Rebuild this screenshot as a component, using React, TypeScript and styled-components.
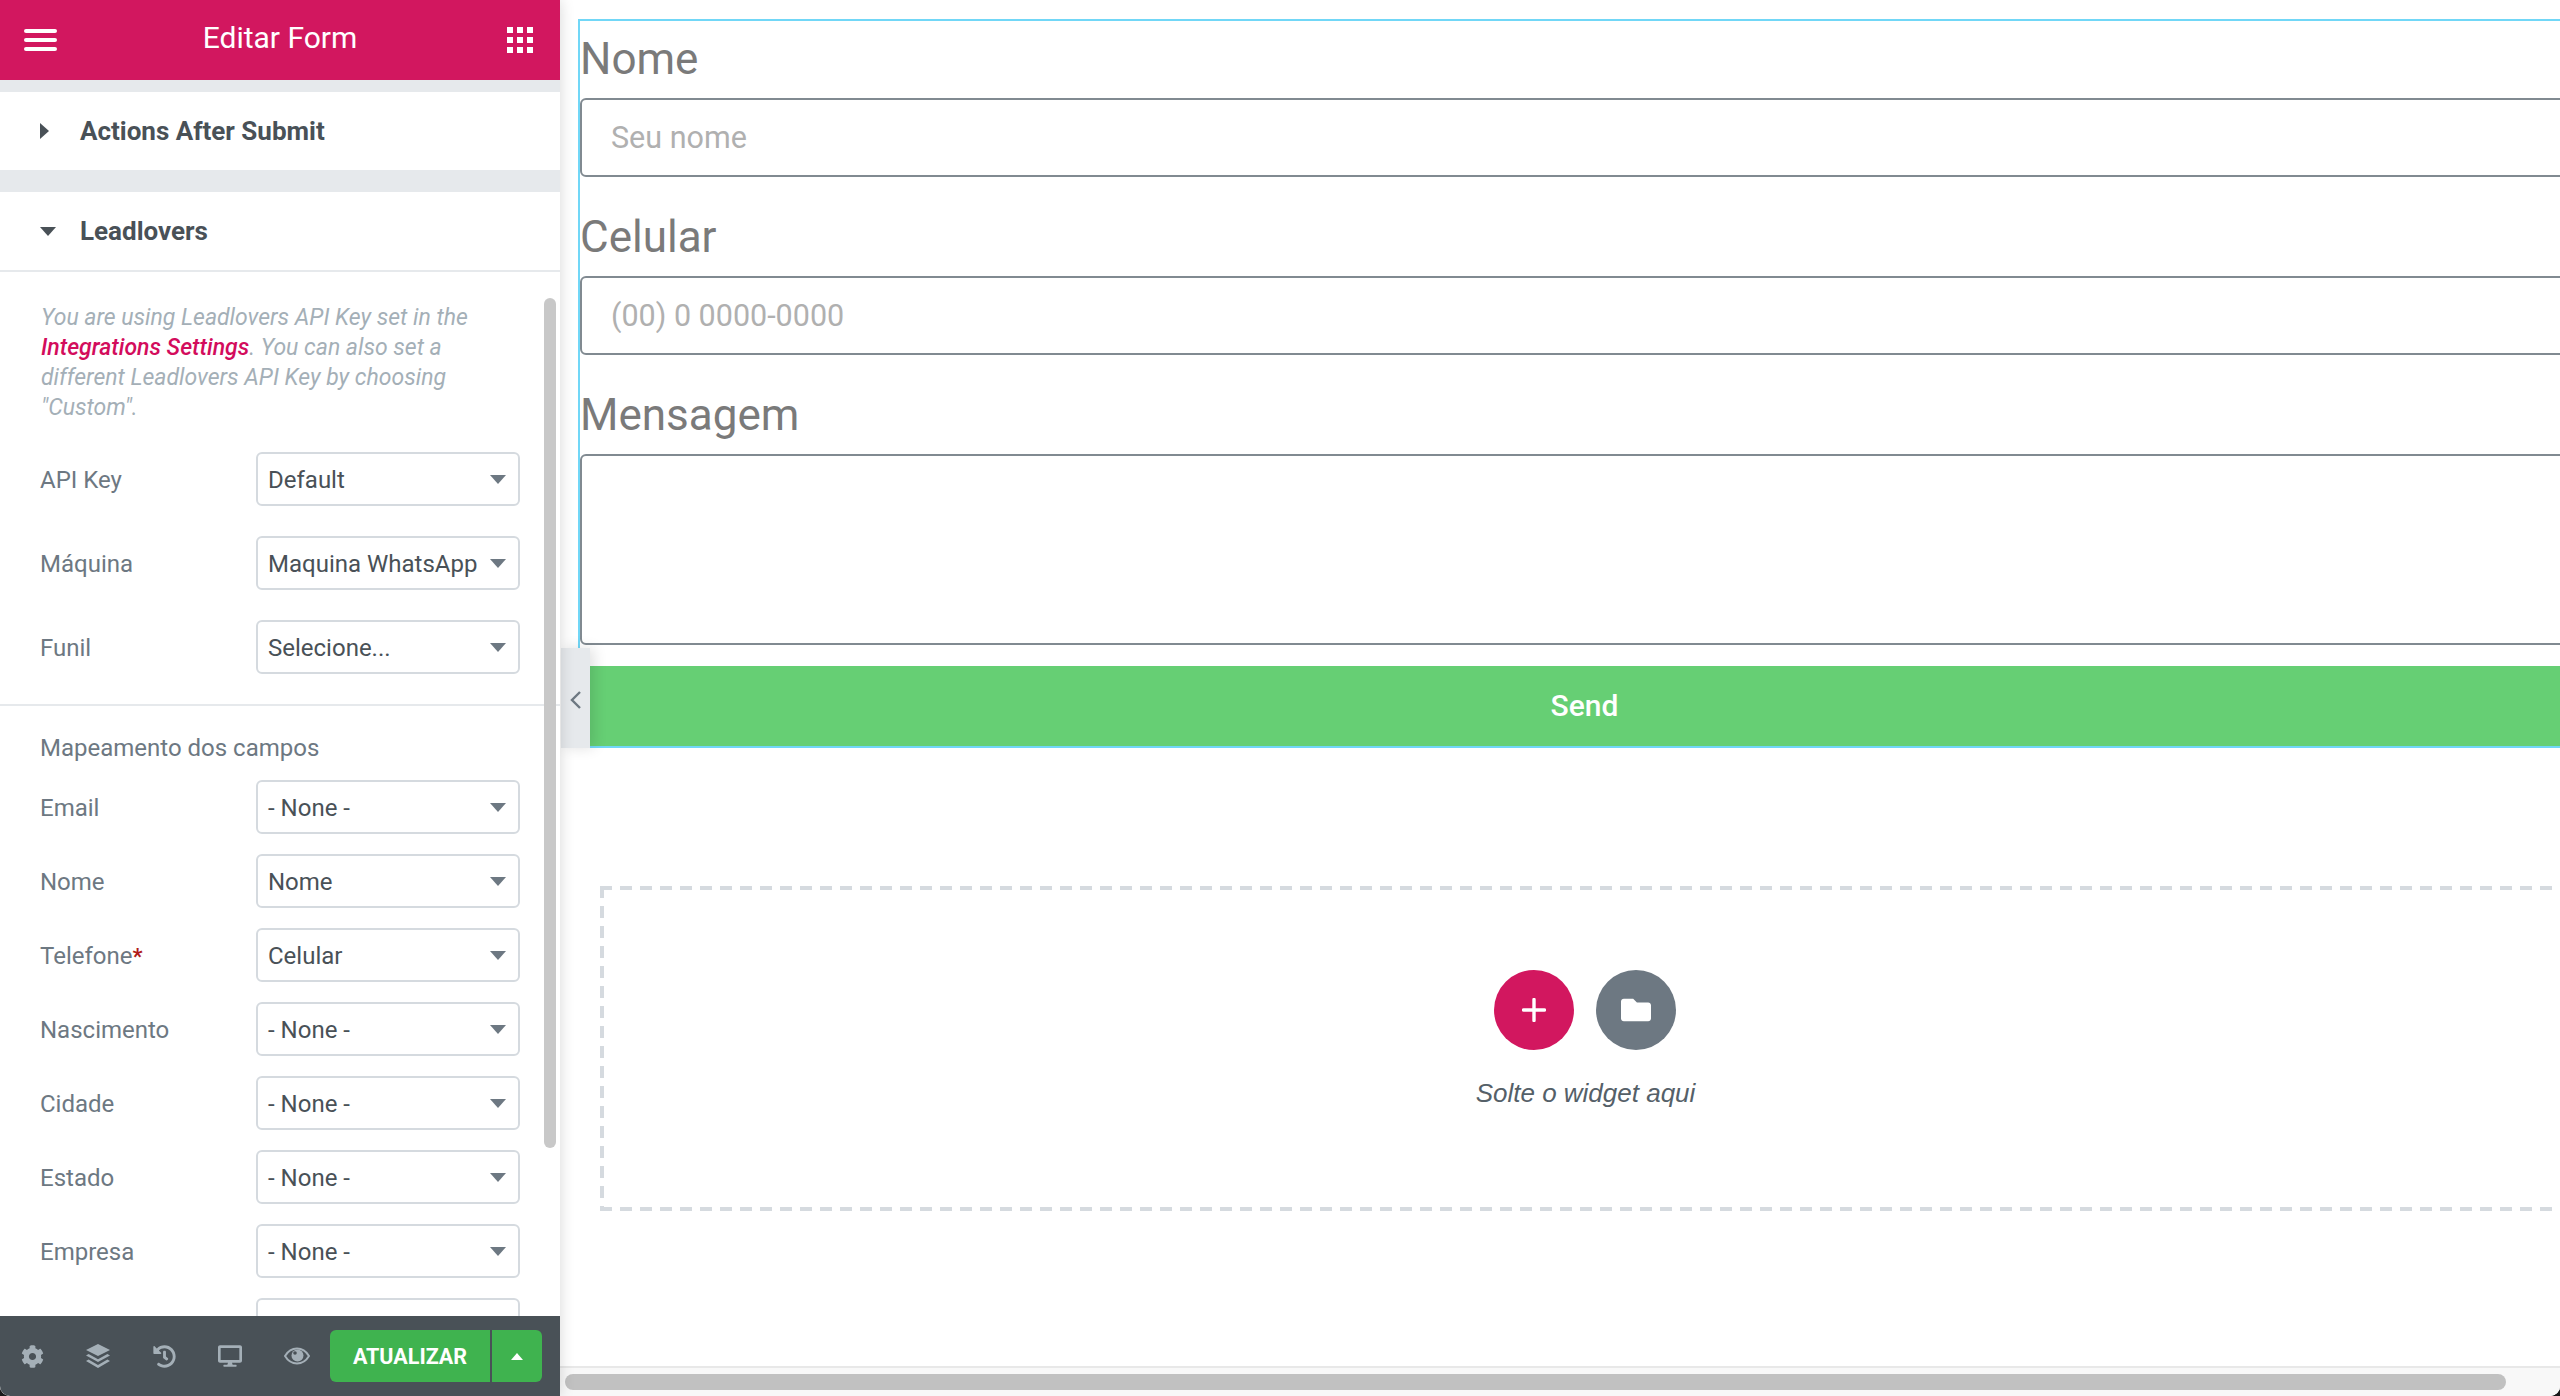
import { FC } from "react";
import styled, { createGlobalStyle } from "styled-components";
import { FaCog, FaDesktop, FaFolder, FaHistory } from "react-icons/fa";

const GlobalStyle = createGlobalStyle`
  html, body {
    margin: 0;
    padding: 0;
    height: 100%;
    background: #1a1a1a;
    overflow: hidden;
  }
  * {
    box-sizing: border-box;
  }
`;

const Screen = styled.div`
  display: flex;
  width: 2560px;
  height: 1396px;
  background: #fff;
  border-radius: 0 0 10px 10px;
  overflow: hidden;
  font-family: Roboto, "Liberation Sans", sans-serif;
`;

/* ---- left panel ---- */
const Panel = styled.aside`
  position: relative;
  z-index: 3;
  display: flex;
  flex-direction: column;
  flex: 0 0 560px;
  height: 100%;
  background: #fff;
  box-shadow: 0 0 14px rgba(0, 0, 0, 0.16);
`;

const PanelHeader = styled.header`
  display: flex;
  align-items: center;
  justify-content: space-between;
  flex: 0 0 80px;
  padding: 0 27px 0 24px;
  background: #d2175f;
  color: #fff;
`;

const PanelTitle = styled.h1`
  margin: 0 4px 6px 0;
  font-size: 30px;
  font-weight: 400;
`;

const Burger = styled.div`
  display: flex;
  flex-direction: column;
  gap: 5px;
  width: 33px;
  span {
    display: block;
    height: 4px;
    background: #fff;
    border-radius: 2px;
  }
`;

const Dots = styled.div`
  display: grid;
  grid-template-columns: repeat(3, 6px);
  grid-auto-rows: 6px;
  gap: 4px;
  span {
    background: #fff;
  }
`;

const PanelBody = styled.div`
  position: relative;
  flex: 1;
  min-height: 0;
  overflow: hidden;
  background: #fff;
`;

const ScrollThumb = styled.div`
  position: absolute;
  top: 218px;
  right: 4px;
  width: 12px;
  height: 850px;
  border-radius: 6px;
  background: #c8c8c8;
`;

const Section = styled.div<{ $top: number; $open?: boolean }>`
  display: flex;
  align-items: center;
  gap: 24px;
  box-sizing: content-box;
  height: 78px;
  padding-left: 40px;
  background: #fff;
  border-top: ${(p) => p.$top}px solid #e6e9ec;
  border-bottom: ${(p) => (p.$open ? "2px solid #e6e9ec" : "0")};
  color: #495157;
  font-size: 26px;
  font-weight: 700;
`;

const Caret = styled.i<{ $dir: "right" | "down" }>`
  display: block;
  width: 0;
  height: 0;
  border-style: solid;
  border-color: transparent;
  ${(p) =>
    p.$dir === "right"
      ? "border-width: 8px 0 8px 9px; border-left-color: #495157; margin-right: 7px;"
      : "border-width: 9px 8px 0 8px; border-top-color: #495157;"}
`;

const Note = styled.p`
  margin: 0;
  padding: 31px 50px 0 41px;
  height: 180px;
  color: #a4afb7;
  font-size: 23px;
  font-style: italic;
  line-height: 30px;
  a {
    color: #d30c5c;
    font-weight: 500;
    text-decoration: none;
  }
`;

const Row = styled.div<{ $space: number }>`
  display: flex;
  align-items: center;
  justify-content: space-between;
  padding: 0 40px;
  margin-bottom: ${(p) => p.$space}px;
`;

const FieldLabel = styled.label`
  padding-top: 2px;
  color: #6d7882;
  font-size: 24px;
  em {
    color: #b01b1b;
    font-size: 22px;
    font-style: normal;
    font-weight: 700;
  }
`;

const SelectBox = styled.div`
  display: flex;
  align-items: center;
  justify-content: space-between;
  width: 264px;
  height: 54px;
  padding: 0 12px 0 10px;
  border: 2px solid #d5dadf;
  border-radius: 6px;
  color: #495157;
  font-size: 24px;
  white-space: nowrap;
  &::after {
    content: "";
    width: 0;
    height: 0;
    border-style: solid;
    border-width: 9px 8px 0 8px;
    border-color: #6d7882 transparent transparent transparent;
  }
`;

const SelectValue = styled.span`
  padding-top: 2px;
`;

const Divider = styled.hr`
  margin: 30px 0 0;
  border: 0;
  border-top: 2px solid #e6e9ec;
`;

const GroupTitle = styled.div`
  padding: 28px 40px 18px;
  color: #6d7882;
  font-size: 24px;
  line-height: 28px;
`;

const PanelFooter = styled.footer`
  display: flex;
  align-items: center;
  flex: 0 0 80px;
  padding: 0 18px 0 21px;
  background: #495157;
  color: #a4afb7;
`;

const FooterIcons = styled.div`
  display: flex;
  align-items: center;
  justify-content: space-between;
  width: 289px;
  margin-right: 20px;
  svg {
    display: block;
  }
`;

const SaveGroup = styled.div`
  display: flex;
  gap: 2px;
  height: 52px;
`;

const SaveButton = styled.button`
  width: 160px;
  padding: 0;
  border: 0;
  border-radius: 6px 0 0 6px;
  background: #3fb34f;
  color: #fff;
  font-family: inherit;
  font-size: 21.5px;
  font-weight: 700;
`;

const SaveArrow = styled.button`
  display: flex;
  align-items: center;
  justify-content: center;
  width: 50px;
  padding: 0;
  border: 0;
  border-radius: 0 6px 6px 0;
  background: #3fb34f;
  &::after {
    content: "";
    width: 0;
    height: 0;
    border-style: solid;
    border-width: 0 6px 7px 6px;
    border-color: transparent transparent #fff transparent;
  }
`;

/* ---- preview ---- */
const Preview = styled.main`
  position: relative;
  display: flex;
  flex-direction: column;
  flex: 1;
  min-width: 0;
  background: #fff;
`;

const Canvas = styled.div`
  flex: 1;
  min-height: 0;
  padding: 19px 0 0 18px;
  overflow: hidden;
`;

const FormWidget = styled.form`
  width: 2013px;
  height: 729px;
  border: 2px solid #71d7f7;
  background: #fff;
`;

const FormLabel = styled.label`
  display: block;
  height: 77px;
  color: #7a7a7a;
  font-size: 44px;
  line-height: 76px;
`;

const TextField = styled.input`
  display: block;
  width: 100%;
  height: 79px;
  margin-bottom: 22px;
  padding: 0 29px;
  border: 2px solid #818a91;
  border-radius: 6px;
  outline: 0;
  font-family: inherit;
  font-size: 30.5px;
  &::placeholder {
    color: #b0b0b0;
    opacity: 1;
  }
`;

const TextArea = styled.textarea`
  display: block;
  width: 100%;
  height: 191px;
  margin-bottom: 21px;
  border: 2px solid #818a91;
  border-radius: 6px;
  outline: 0;
  resize: none;
`;

const SendButton = styled.button`
  display: block;
  width: 100%;
  height: 80px;
  padding: 0 0 2px;
  border: 0;
  background: #66cf74;
  color: #fff;
  font-family: inherit;
  font-size: 30px;
  font-weight: 500;
`;

const DropArea = styled.div`
  display: flex;
  flex-direction: column;
  align-items: center;
  width: 1971px;
  height: 325px;
  margin: 138px 0 0 22px;
  padding-top: 84px;
  background:
    repeating-linear-gradient(90deg, #d5dadf 0 12px, transparent 12px 20px) top / 100% 4px no-repeat,
    repeating-linear-gradient(90deg, #d5dadf 0 12px, transparent 12px 20px) bottom / 100% 4px no-repeat,
    repeating-linear-gradient(180deg, #d5dadf 0 12px, transparent 12px 20px) left / 4px 100% no-repeat,
    repeating-linear-gradient(180deg, #d5dadf 0 12px, transparent 12px 20px) right / 4px 100% no-repeat;
`;

const DropButtons = styled.div`
  display: flex;
  gap: 22px;
  margin-right: 2px;
`;

const RoundButton = styled.div<{ $bg: string }>`
  display: flex;
  align-items: center;
  justify-content: center;
  width: 80px;
  height: 80px;
  border-radius: 50%;
  background: ${(p) => p.$bg};
  color: #fff;
`;

const DropText = styled.div`
  margin-top: 27px;
  color: #556068;
  font-family: "Liberation Sans", Arial, sans-serif;
  font-size: 26px;
  font-style: italic;
  line-height: 32px;
`;

const CollapseHandle = styled.div`
  position: absolute;
  top: 648px;
  left: 1px;
  display: flex;
  align-items: center;
  justify-content: center;
  width: 29px;
  height: 100px;
  padding-top: 3px;
  background: #e6e9ec;
  box-shadow: 4px 0 14px rgba(0, 0, 0, 0.12);
  svg {
    display: block;
  }
`;

const HScroll = styled.div`
  flex: 0 0 30px;
  padding: 6px 54px 4px 5px;
  background: #f8f8f8;
  border-top: 2px solid #e8e8e8;
`;

const HThumb = styled.div`
  height: 16px;
  border-radius: 8px;
  background: #c1c1c1;
`;

const LayersIcon: FC = () => (
  <svg width="24" height="24" viewBox="0 0 24 24" fill="currentColor">
    <path d="M12 0 24 6 12 12 0 6z" />
    <path d="M2.6 10 0 11.4 12 18 24 11.4 21.4 10 12 15.2z" />
    <path d="M2.6 15.6 0 17 12 24 24 17 21.4 15.6 12 21z" />
  </svg>
);

const EyeIcon: FC = () => (
  <svg width="26" height="18" viewBox="0 0 26 18" fill="none">
    <path d="M1 9C4 4 8 1.5 13 1.5S22 4 25 9c-3 5-7 7.5-12 7.5S4 14 1 9z" stroke="currentColor" strokeWidth="2" />
    <circle cx="13.5" cy="8.5" r="6" fill="currentColor" />
    <circle cx="11" cy="6" r="1.8" fill="#495157" />
  </svg>
);

const PlusIcon: FC = () => (
  <svg width="24" height="24" viewBox="0 0 24 24" stroke="currentColor" strokeWidth="3.4" strokeLinecap="round">
    <path d="M12 1.5v21M1.5 12h21" />
  </svg>
);

const mainRows: [string, string][] = [
  ["API Key", "Default"],
  ["Máquina", "Maquina WhatsApp"],
  ["Funil", "Selecione..."],
];

const mapRows: [string, string][] = [
  ["Email", "- None -"],
  ["Nome", "Nome"],
  ["Telefone", "Celular"],
  ["Nascimento", "- None -"],
  ["Cidade", "- None -"],
  ["Estado", "- None -"],
  ["Empresa", "- None -"],
  ["", ""],
];

export default function App() {
  return (
    <>
      <GlobalStyle />
      <Screen>
        <Panel>
          <PanelHeader>
            <Burger>
              <span />
              <span />
              <span />
            </Burger>
            <PanelTitle>Editar Form</PanelTitle>
            <Dots>
              {Array.from({ length: 9 }).map((_, i) => (
                <span key={i} />
              ))}
            </Dots>
          </PanelHeader>
          <PanelBody>
            <Section $top={12}>
              <Caret $dir="right" />
              Actions After Submit
            </Section>
            <Section $top={22} $open>
              <Caret $dir="down" />
              Leadlovers
            </Section>
            <Note>
              You are using Leadlovers API Key set in the <a href="#">Integrations Settings</a>. You can also set a
              different Leadlovers API Key by choosing "Custom".
            </Note>
            {mainRows.map(([label, value]) => (
              <Row key={label} $space={30}>
                <FieldLabel>{label}</FieldLabel>
                <SelectBox>
                  <SelectValue>{value}</SelectValue>
                </SelectBox>
              </Row>
            ))}
            <Divider />
            <GroupTitle>Mapeamento dos campos</GroupTitle>
            {mapRows.map(([label, value]) => (
              <Row key={label} $space={20}>
                <FieldLabel>
                  {label}
                  {label === "Telefone" && <em>*</em>}
                </FieldLabel>
                <SelectBox>
                  <SelectValue>{value}</SelectValue>
                </SelectBox>
              </Row>
            ))}
            <ScrollThumb />
          </PanelBody>
          <PanelFooter>
            <FooterIcons>
              <FaCog size={23} />
              <LayersIcon />
              <FaHistory size={23} />
              <FaDesktop size={24} />
              <EyeIcon />
            </FooterIcons>
            <SaveGroup>
              <SaveButton>ATUALIZAR</SaveButton>
              <SaveArrow />
            </SaveGroup>
          </PanelFooter>
        </Panel>
        <Preview>
          <Canvas>
            <FormWidget>
              <FormLabel>Nome</FormLabel>
              <TextField placeholder="Seu nome" />
              <FormLabel>Celular</FormLabel>
              <TextField placeholder="(00) 0 0000-0000" />
              <FormLabel>Mensagem</FormLabel>
              <TextArea />
              <SendButton type="button">Send</SendButton>
            </FormWidget>
            <DropArea>
              <DropButtons>
                <RoundButton $bg="#d2175f">
                  <PlusIcon />
                </RoundButton>
                <RoundButton $bg="#6d7882">
                  <FaFolder size={30} />
                </RoundButton>
              </DropButtons>
              <DropText>Solte o widget aqui</DropText>
            </DropArea>
          </Canvas>
          <CollapseHandle>
            <svg width="12" height="20" viewBox="0 0 12 20" fill="none" stroke="#6d7882" strokeWidth="2.4">
              <path d="M10 2 2 10l8 8" />
            </svg>
          </CollapseHandle>
          <HScroll>
            <HThumb />
          </HScroll>
        </Preview>
      </Screen>
    </>
  );
}
